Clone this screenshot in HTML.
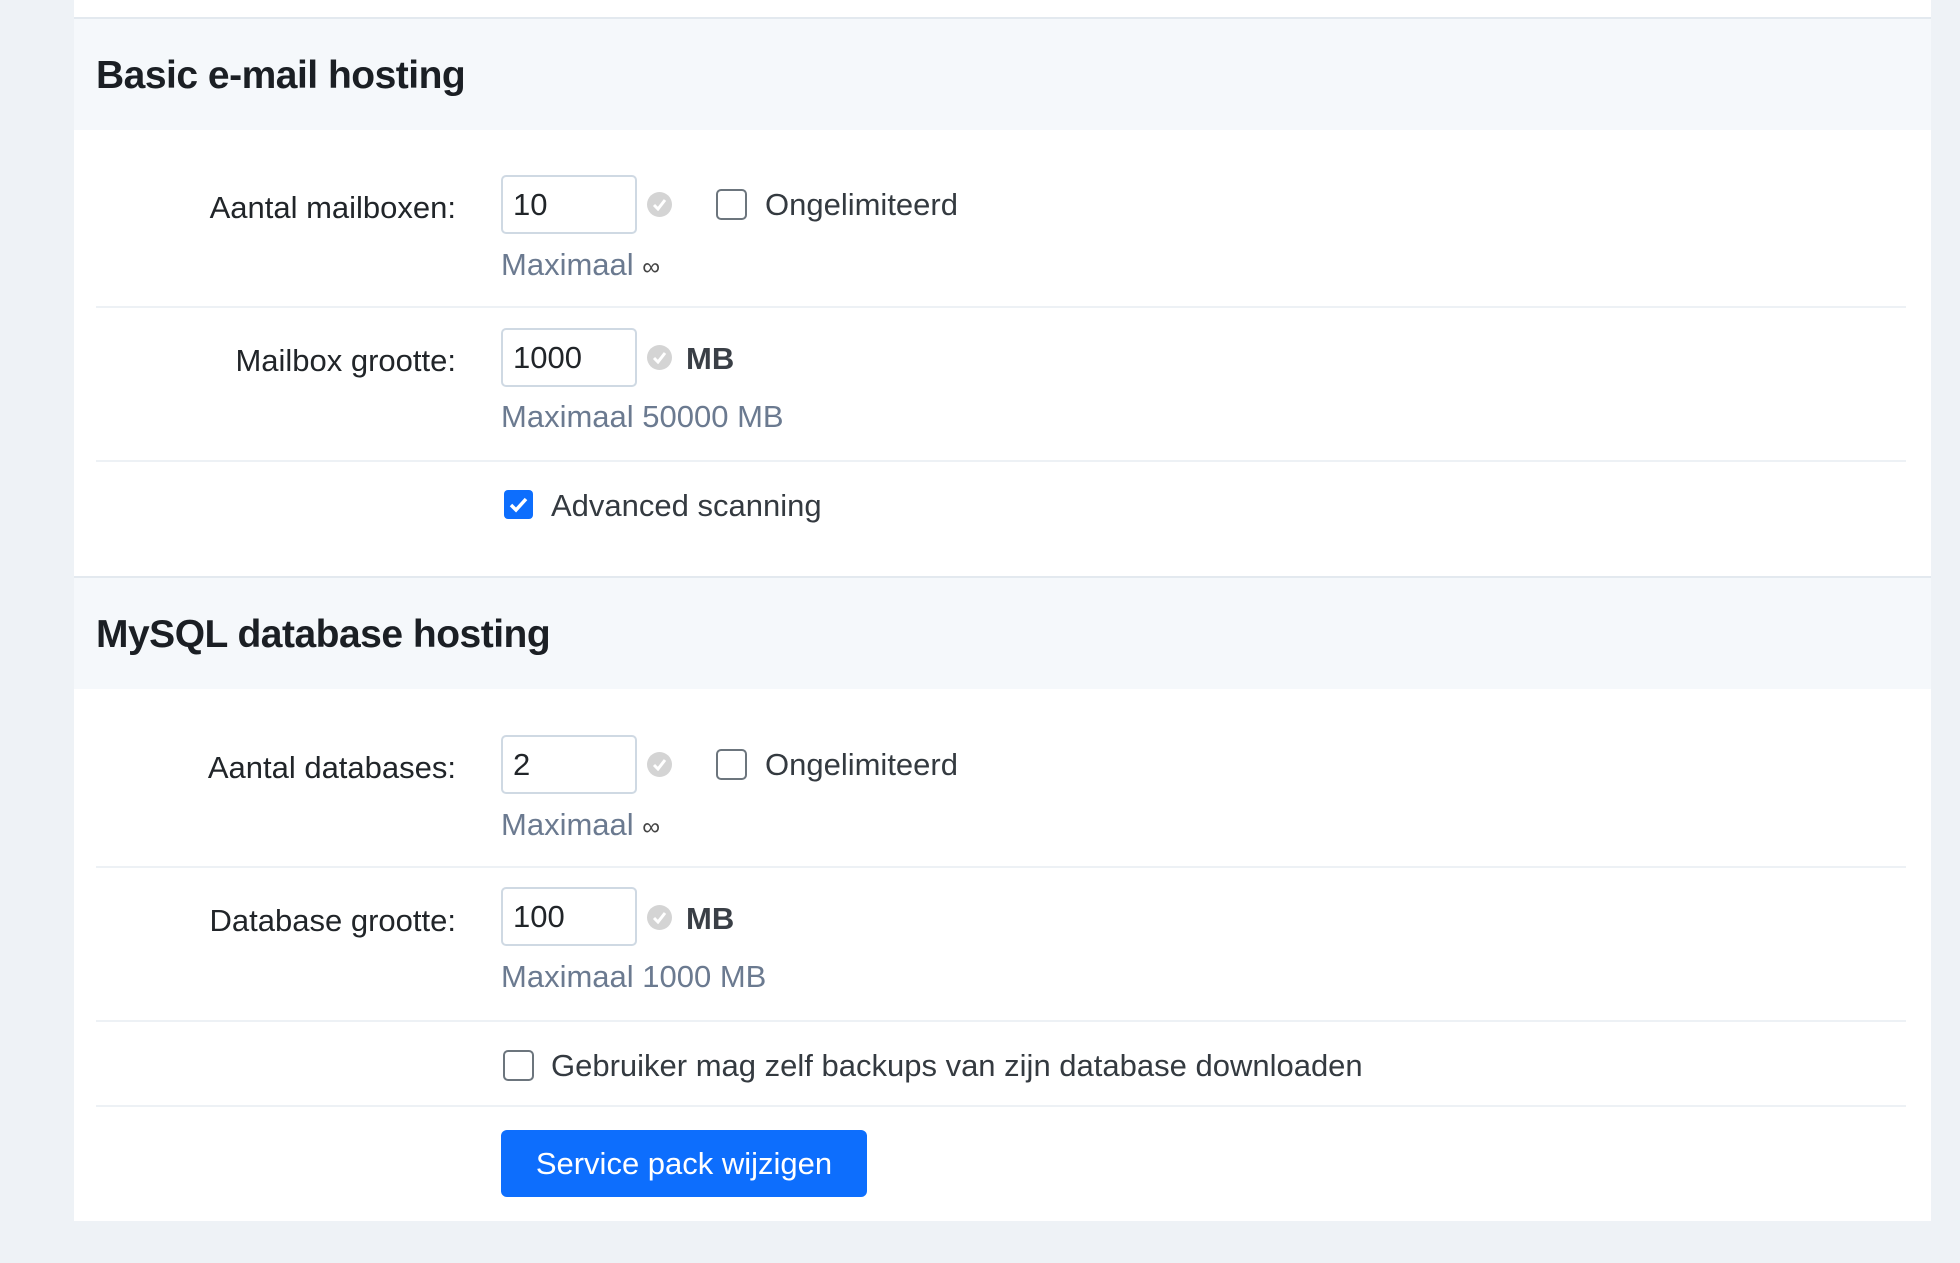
<!DOCTYPE html>
<html><head><meta charset="utf-8"><style>
*{box-sizing:border-box;margin:0;padding:0}
body{width:1960px;height:1263px;background:#eef2f6;font-family:"Liberation Sans",sans-serif;position:relative;overflow:hidden}
.card{position:absolute;left:74px;top:0;width:1857px;height:1221px;background:#fff;border-top:none}
.a{position:absolute;white-space:nowrap}
.hdr{position:absolute;left:74px;width:1857px;height:113px;background:#f5f8fb;border-top:2px solid #e3e9ef}
.title{font-weight:bold;font-size:39px;color:#1b1f24;letter-spacing:-0.5px;line-height:1}
.lbl{font-size:31px;color:#212529;text-align:right;width:420px;left:36px;line-height:1}
.inp{position:absolute;width:136px;height:59px;border:2px solid #cfd9e3;border-radius:5px;font-size:31px;color:#212529;padding:10px 0 0 10px;background:#fff}
.chk{position:absolute;width:25px;height:25px;border-radius:50%;background:#d4d4d4}
.chk svg{position:absolute;left:5px;top:6px}
.cb{position:absolute;width:31px;height:31px;border:2px solid #6c757d;border-radius:5px;background:#fff}
.muted{font-size:31px;color:#6b7a90;line-height:1}
.txt{font-size:31px;color:#343a40;line-height:1}
.sep{position:absolute;left:96px;width:1810px;height:2px;background:#edf1f5}
.btn{position:absolute;left:501px;top:1130px;width:366px;height:67px;background:#0d6efd;border-radius:6px;color:#fff;font-size:31px;text-align:center;line-height:67px}
.inf{font-size:25px;color:#444}
</style></head><body>
<div class="card"></div>
<div class="hdr" style="top:17px"></div>
<div class="a title" style="left:96px;top:56px">Basic e-mail hosting</div>

<div class="a lbl" style="top:192px">Aantal mailboxen:</div>
<div class="inp" style="left:501px;top:175px">10</div>
<div class="chk" style="left:647px;top:192px"><svg width="15" height="13" viewBox="0 0 15 13"><path d="M2 7l4 4 7-9" stroke="#fff" stroke-width="3" fill="none"/></svg></div>
<div class="cb" style="left:716px;top:189px"></div>
<div class="a txt" style="left:765px;top:189px">Ongelimiteerd</div>
<div class="a muted" style="left:501px;top:249px">Maximaal <span class="inf">∞</span></div>
<div class="sep" style="top:306px"></div>

<div class="a lbl" style="top:345px">Mailbox grootte:</div>
<div class="inp" style="left:501px;top:328px">1000</div>
<div class="chk" style="left:647px;top:345px"><svg width="15" height="13" viewBox="0 0 15 13"><path d="M2 7l4 4 7-9" stroke="#fff" stroke-width="3" fill="none"/></svg></div>
<div class="a txt" style="left:686px;top:343px;font-weight:bold;color:#3a3f46">MB</div>
<div class="a muted" style="left:501px;top:401px">Maximaal 50000 MB</div>
<div class="sep" style="top:460px"></div>

<div class="a" style="left:504px;top:490px;width:29px;height:29px;background:#0d6efd;border-radius:4px"><svg width="29" height="29" viewBox="0 0 29 29"><path d="M7 15l5 5 10-11" stroke="#fff" stroke-width="3.5" fill="none"/></svg></div>
<div class="a txt" style="left:551px;top:490px">Advanced scanning</div>

<div class="hdr" style="top:576px"></div>
<div class="a title" style="left:96px;top:615px">MySQL database hosting</div>

<div class="a lbl" style="top:752px">Aantal databases:</div>
<div class="inp" style="left:501px;top:735px">2</div>
<div class="chk" style="left:647px;top:752px"><svg width="15" height="13" viewBox="0 0 15 13"><path d="M2 7l4 4 7-9" stroke="#fff" stroke-width="3" fill="none"/></svg></div>
<div class="cb" style="left:716px;top:749px"></div>
<div class="a txt" style="left:765px;top:749px">Ongelimiteerd</div>
<div class="a muted" style="left:501px;top:809px">Maximaal <span class="inf">∞</span></div>
<div class="sep" style="top:866px"></div>

<div class="a lbl" style="top:905px">Database grootte:</div>
<div class="inp" style="left:501px;top:887px">100</div>
<div class="chk" style="left:647px;top:905px"><svg width="15" height="13" viewBox="0 0 15 13"><path d="M2 7l4 4 7-9" stroke="#fff" stroke-width="3" fill="none"/></svg></div>
<div class="a txt" style="left:686px;top:903px;font-weight:bold;color:#3a3f46">MB</div>
<div class="a muted" style="left:501px;top:961px">Maximaal 1000 MB</div>
<div class="sep" style="top:1020px"></div>

<div class="cb" style="left:503px;top:1050px"></div>
<div class="a txt" style="left:551px;top:1050px">Gebruiker mag zelf backups van zijn database downloaden</div>
<div class="sep" style="top:1105px"></div>

<div class="btn">Service pack wijzigen</div>
</body></html>
